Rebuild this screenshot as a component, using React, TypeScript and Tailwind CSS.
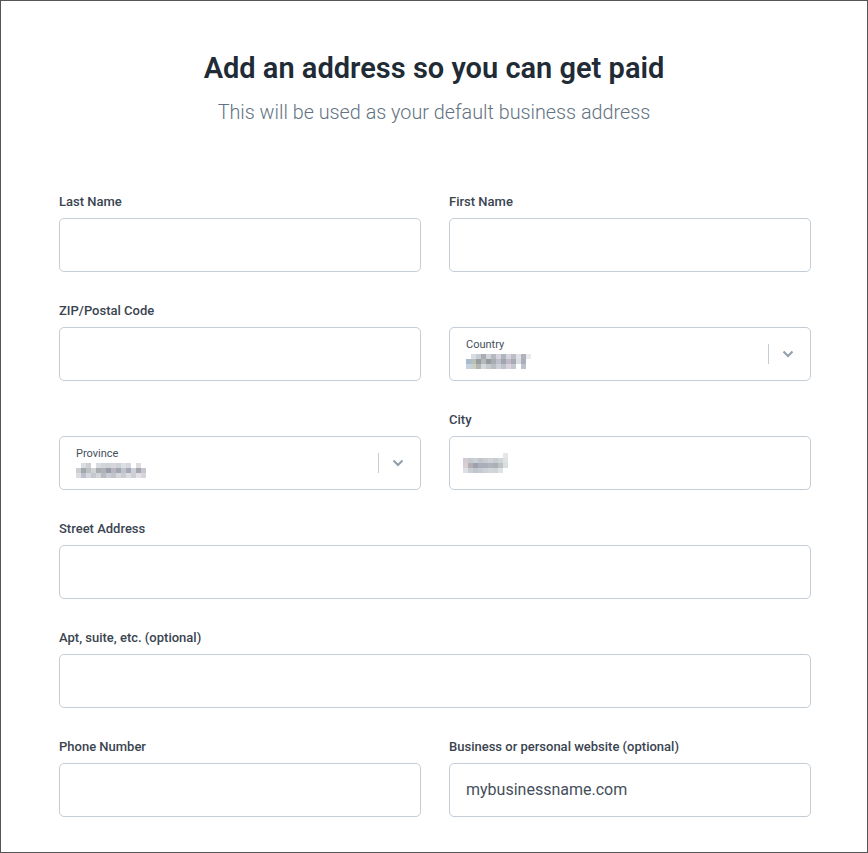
import React from "react";

const font = { fontFamily: "Roboto, 'Noto Sans', sans-serif" };

// pixelated blur over the redacted values
const countryCells = [
  "bg-white", "bg-[#d6dde6]", "bg-[#c6ccd3]", "bg-[#a9aeb4]", "bg-[#d0d3d8]", "bg-[#b4b8bf]", "bg-[#d4d4da]", "bg-[#b1b6be]", "bg-[#d6d5dd]", "bg-[#bbbec6]", "bg-[#e0e0e5]", "bg-[#adb2bb]", "bg-[#eaeaee]",
  "bg-[#a6bbd1]", "bg-[#b9bfb7]", "bg-[#979d9c]", "bg-[#b4baba]", "bg-[#969b9f]", "bg-[#a6acb1]", "bg-[#bfbfc7]", "bg-[#9fa6b1]", "bg-[#c1b9c7]", "bg-[#a8acb6]", "bg-[#dcdce3]", "bg-[#a9aebd]", "bg-white",
  "bg-[#c6d2e0]", "bg-[#cacec9]", "bg-[#b1b6b2]", "bg-[#d4d8d8]", "bg-[#c6cacd]", "bg-[#b9bec2]", "bg-[#cdd0d6]", "bg-[#bec2c9]", "bg-[#d8d3dd]", "bg-[#c6c9d0]", "bg-white", "bg-[#bec2cb]", "bg-white",
];
const provinceCells = [
  "bg-white", "bg-[#dcdde1]", "bg-[#cccfd3]", "bg-white", "bg-[#d9dbe0]", "bg-[#d2d5da]", "bg-[#cfd2d7]", "bg-[#d9d5dd]", "bg-[#cdd1d8]", "bg-[#dcdfe3]", "bg-[#d4d7dd]", "bg-white", "bg-[#dfdbe3]", "bg-white", "bg-white", "bg-white",
  "bg-[#cbcfd4]", "bg-[#a3a8ae]", "bg-[#bdc1c2]", "bg-[#d0d2d4]", "bg-[#a8adb1]", "bg-[#b1b1b8]", "bg-[#979cab]", "bg-[#bab5c0]", "bg-[#a0a6b1]", "bg-[#bfc3cb]", "bg-[#a3a9b6]", "bg-[#cfcfd6]", "bg-[#a3a8af]", "bg-[#c9c5d0]", "bg-white", "bg-white",
  "bg-[#dcdde1]", "bg-[#bbbfcf]", "bg-[#d6d7db]", "bg-[#c3c7ce]", "bg-[#d2d5da]", "bg-[#b8bbc2]", "bg-[#c8ccd3]", "bg-[#c3c3cd]", "bg-[#d6d6dc]", "bg-[#c9ccd3]", "bg-[#dcdce1]", "bg-[#cccfd5]", "bg-[#e2e2e6]", "bg-[#d8d3dd]", "bg-white", "bg-white",
];
const cityCells = [
  "bg-white", "bg-white", "bg-white", "bg-white", "bg-white", "bg-white", "bg-white", "bg-white", "bg-[#e6e6ea]",
  "bg-[#d5cad0]", "bg-[#c4c9d0]", "bg-[#cbd0d5]", "bg-[#c1c6cd]", "bg-[#c9cdd3]", "bg-[#d0d2d7]", "bg-[#c6ccd0]", "bg-[#d0d5d8]", "bg-[#dee2e2]",
  "bg-[#d8cfd4]", "bg-[#b4afae]", "bg-[#9aa0b0]", "bg-[#a9aeb9]", "bg-[#aaafb9]", "bg-[#afb4bd]", "bg-[#aab0b4]", "bg-[#bdc2c5]", "bg-[#dadede]",
  "bg-[#dce0e4]", "bg-[#c9ced4]", "bg-[#c1c6ce]", "bg-[#c6cbd1]", "bg-[#cdd0d6]", "bg-[#d2d6db]", "bg-[#d0d5d8]", "bg-[#dee2e3]", "bg-white",
];

function Mosaic({ cells, cols, cell }: { cells: string[]; cols: number; cell: string }) {
  return (
    <div
      className="grid"
      style={{ gridTemplateColumns: `repeat(${cols}, auto)`, width: "fit-content" }}
    >
      {cells.map((c, i) => (
        <div key={i} className={`${cell} ${c}`} />
      ))}
    </div>
  );
}

function Label({ text }: { text?: string }) {
  return (
    <div className="h-4 text-[13px] leading-4 font-medium text-[#3a4450] mb-2">
      {text ?? "\u00a0"}
    </div>
  );
}

function TextField({ label, value }: { label?: string; value?: React.ReactNode }) {
  return (
    <div className="flex flex-col">
      <Label text={label} />
      <div className="h-[54px] rounded-[5px] border border-[#c4cdd5] bg-white flex items-center px-4 text-[16px] text-[#454f5b]">
        {value}
      </div>
    </div>
  );
}

function SelectField({ label, title, value }: { label?: string; title: string; value: React.ReactNode }) {
  return (
    <div className="flex flex-col">
      <Label text={label} />
      <div className="h-[54px] rounded-[5px] border border-[#c4cdd5] bg-white flex items-center pl-4 pr-[14px]">
        <div className="flex-1 self-start flex flex-col pt-[10px]">
          <span className="text-[11px] leading-[14px] text-[#454f5b]">{title}</span>
          <div className="mt-[2px]">{value}</div>
        </div>
        <div className="w-px h-5 bg-[#c4cdd5]" />
        <svg width="12" height="8" viewBox="0 0 12 8" className="ml-[13px] mr-[2px]">
          <path d="M1.5 1.5 L6 6 L10.5 1.5" fill="none" stroke="#919eab" strokeWidth="2" />
        </svg>
      </div>
    </div>
  );
}

export default function App() {
  return (
    <div style={font} className="w-[868px] h-[853px] border border-[#555555] bg-white overflow-hidden">
      <div className="pt-[49px] text-center">
        <h1 className="text-[29px] leading-9 font-semibold text-[#212b36]">
          Add an address so you can get paid
        </h1>
        <p className="mt-[15px] text-[19.8px] leading-6 font-light text-[#637381]">
          This will be used as your default business address
        </p>
      </div>

      <div className="ml-[58px] mt-[69px] w-[752px] grid grid-cols-2 gap-x-[28px] gap-y-[31px]">
        <TextField label="Last Name" />
        <TextField label="First Name" />
        <TextField label="ZIP/Postal Code" />
        <SelectField
          title="Country"
          value={<Mosaic cells={countryCells} cols={13} cell="w-[5px] h-[5px]" />}
        />
        <SelectField
          title="Province"
          value={<Mosaic cells={provinceCells} cols={16} cell="w-[5px] h-[5px]" />}
        />
        <TextField
          label="City"
          value={<div className="-ml-[3px]"><Mosaic cells={cityCells} cols={9} cell="w-[5px] h-[5px]" /></div>}
        />
        <div className="col-span-2">
          <TextField label="Street Address" />
        </div>
        <div className="col-span-2">
          <TextField label="Apt, suite, etc. (optional)" />
        </div>
        <TextField label="Phone Number" />
        <TextField label="Business or personal website (optional)" value="mybusinessname.com" />
      </div>
    </div>
  );
}
